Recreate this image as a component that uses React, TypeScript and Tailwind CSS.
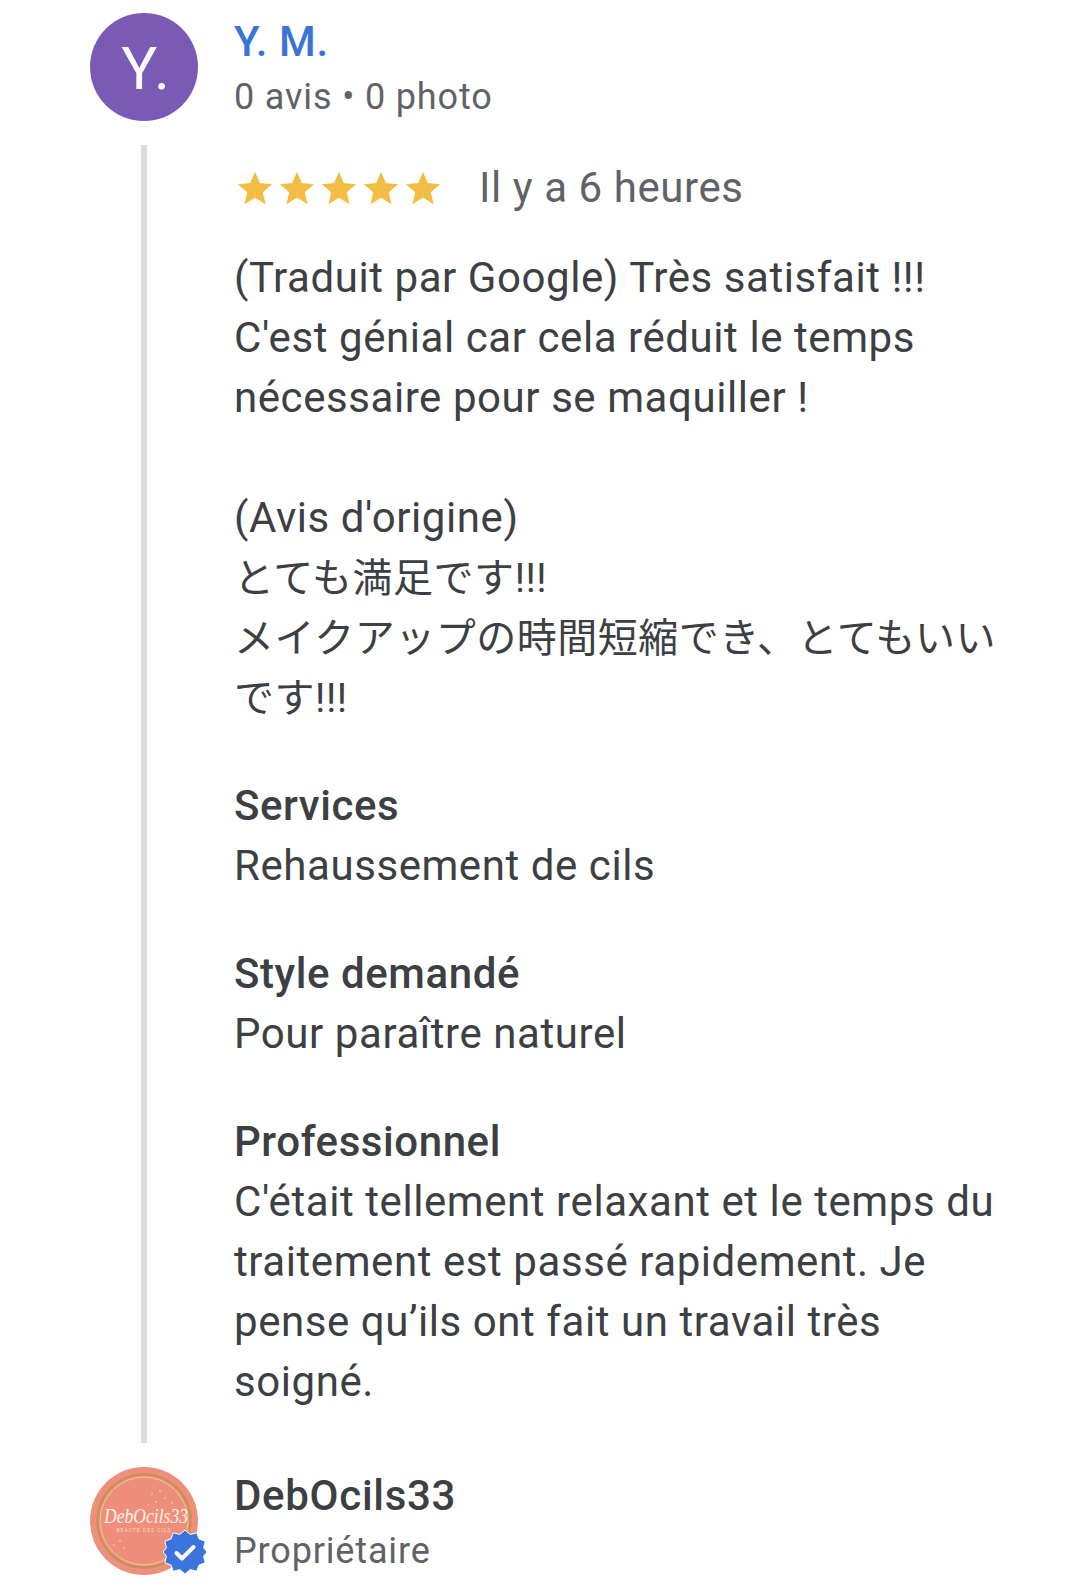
const bodyFont = "font-['Roboto','Noto_Sans_CJK_JP',sans-serif]";

function Star() {
  return (
    <svg viewBox="0 0 24 24" className="w-[38px] h-[38px] mx-[2px] shrink-0">
      <path fill="#f2bd44" d="M12 1.7l3.05 7.2 7.75.66-5.88 5.1 1.77 7.6L12 18.2l-6.69 4.06 1.77-7.6-5.88-5.1 7.75-.66z" />
    </svg>
  );
}

function VerifiedBadge() {
  return (
    <svg viewBox="0 0 44 44" className="absolute left-[73px] top-[63px] w-[44px] h-[44px] overflow-visible">
      <path
        fill="#3b74dc"
        stroke="#ffffff"
        strokeWidth="1"
        strokeLinejoin="round"
        d="M22 0l5.2 4.4 6.6-1.6 2.2 6.2 6.2 2.2-1.6 6.6L44 22l-3.4 4.2 1.6 6.6-6.2 2.2-2.2 6.2-6.6-1.6L22 44l-5.2-4.4-6.6 1.6-2.2-6.2-6.2-2.2 1.6-6.6L0 22l3.4-4.2-1.6-6.6 6.2-2.2 2.2-6.2 6.6 1.6z"
      />
      <path fill="none" stroke="#ffffff" strokeWidth="4" strokeLinecap="round" strokeLinejoin="round" d="M13.5 23l5.5 5.5 11.5-11.5" />
    </svg>
  );
}

function OwnerLogo() {
  return (
    <div className="relative w-[108px] h-[108px] shrink-0">
      <svg viewBox="0 0 108 108" className="w-[108px] h-[108px] overflow-visible">
        <circle cx="54" cy="54" r="54" fill="#ee8f7c" />
        <circle cx="54" cy="54" r="46.5" fill="none" stroke="#c9915a" strokeWidth="2.6" />
        <circle cx="54" cy="54" r="44" fill="none" stroke="#ecc6a0" strokeWidth="1" />
        <g fill="#f9dcc4">
          <circle cx="62" cy="27" r="0.8" />
          <circle cx="70" cy="24" r="0.8" />
          <circle cx="75" cy="31" r="0.8" />
          <circle cx="66" cy="35" r="0.8" />
          <circle cx="82" cy="36" r="0.8" />
          <circle cx="58" cy="38" r="0.8" />
          <circle cx="30" cy="74" r="0.8" />
          <circle cx="24" cy="78" r="0.8" />
          <circle cx="34" cy="81" r="0.8" />
        </g>
        <text x="56" y="56" textAnchor="middle" fontFamily="'Liberation Serif',serif" fontStyle="italic" fontWeight="400" fontSize="22" fill="#fdf1e8" textLength="84" lengthAdjust="spacingAndGlyphs">
          DebOcils33
        </text>
        <text x="54" y="65" textAnchor="middle" fontFamily="'Roboto',sans-serif" fontSize="5" letterSpacing="1" fill="#f9dcc4">
          BEAUTE DES CILS
        </text>
      </svg>
      <VerifiedBadge />
    </div>
  );
}

function Section({ title, children }: { title: string; children: React.ReactNode }) {
  return (
    <div className="mt-[48px]">
      <div className="font-medium">{title}</div>
      <div>{children}</div>
    </div>
  );
}

export default function App() {
  return (
    <div className={`w-[1080px] h-[1593px] overflow-hidden bg-white pl-[90px] pt-[13px] ${bodyFont}`}>
      {/* Reviewer */}
      <div className="flex gap-[37px]">
        <div className="w-[108px] h-[108px] rounded-full bg-[#7b5ab6] flex items-center justify-center text-white text-[60px] tracking-[3px] pt-[4px] pl-[6px] shrink-0">
          Y.
        </div>
        <div className="pt-[2px] -ml-[1px]">
          <div className="text-[42px] leading-[54px] font-medium text-[#3b74d9] tracking-[0.6px]">Y. M.</div>
          <div className="text-[36px] leading-[57px] text-[#5f6368] tracking-[0.85px]">0 avis • 0 photo</div>
        </div>
      </div>

      {/* Review */}
      <div className="flex mt-[19px]">
        <div className="w-[108px] shrink-0 flex justify-center">
          <div className="w-[6px] h-[1298px] bg-[#dadce0]" />
        </div>
        <div className="ml-[36px] w-[790px] text-[42px] leading-[60px] text-[#3c4043] tracking-[0.57px]">
          <div className="flex items-center h-[60px] mt-[13px] text-[#5f6368]">
            <Star />
            <Star />
            <Star />
            <Star />
            <Star />
            <span className="ml-[35px]">Il y a 6 heures</span>
          </div>
          <div className="mt-[30px]">
            <div>(Traduit par Google) Très satisfait !!!</div>
            <div>C'est génial car cela réduit le temps</div>
            <div>nécessaire pour se maquiller !</div>
            <div className="mt-[60px]">(Avis d'origine)</div>
            <div className="h-[60px] text-[40px] leading-[62px] tracking-[0.55px]">とても満足です!!!</div>
            <div className="h-[60px] text-[40px] leading-[62px] tracking-[0.5px]">メイクアップの時間短縮でき、とてもいい</div>
            <div className="h-[60px] text-[40px] leading-[62px] tracking-[0.55px]">です!!!</div>
          </div>
          <Section title="Services">Rehaussement de cils</Section>
          <Section title="Style demandé">Pour paraître naturel</Section>
          <Section title="Professionnel">
            C'était tellement relaxant et le temps du
            <br />
            traitement est passé rapidement. Je
            <br />
            pense qu’ils ont fait un travail très
            <br />
            soigné.
          </Section>
        </div>
      </div>

      {/* Owner */}
      <div className="flex gap-[37px] mt-[24px]">
        <OwnerLogo />
        <div className="pt-[2px] -ml-[1px]">
          <div className="text-[42px] leading-[54px] font-medium text-[#3c4043] tracking-[0.7px]">DebOcils33</div>
          <div className="text-[36px] leading-[57px] text-[#5f6368] tracking-[0.85px]">Propriétaire</div>
        </div>
      </div>
    </div>
  );
}
